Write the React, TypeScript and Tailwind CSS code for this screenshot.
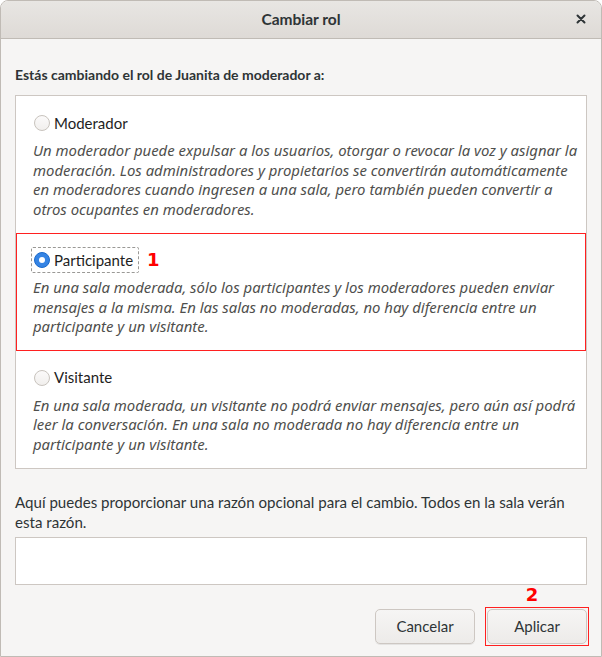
import React from "react";

const REG = { fontFamily: "Lato, 'Noto Sans', sans-serif" };
const ITAL = { fontFamily: "'Noto Sans', 'Open Sans', sans-serif" };

function Radio({ checked }: { checked?: boolean }) {
  if (checked) {
    return (
      <span className="w-[16px] h-[16px] rounded-full bg-[#3584e4] border border-[#1b6acb] flex items-center justify-center shrink-0">
        <span className="w-[6px] h-[6px] rounded-full bg-white" />
      </span>
    );
  }
  return (
    <span className="w-[16px] h-[16px] rounded-full bg-gradient-to-b from-[#fbfafa] to-[#f1efed] border border-[#c8c3bd] shrink-0" />
  );
}

function Row({
  label,
  lines,
  checked,
  annotate,
}: {
  label: string;
  lines: string[];
  checked?: boolean;
  annotate?: boolean;
}) {
  return (
    <div className="relative px-[15px] pt-[15px] pb-[14px]">
      {annotate && (
        <div className="absolute inset-0 border border-[#ff2020] pointer-events-none" />
      )}
      <div className="flex items-center h-[24px]">
        <div
          className={
            "flex items-center gap-[4px] h-[26px] pl-[2px] pr-[5px] rounded-[2px] border " +
            (checked ? "border-dashed border-[#9a9996]" : "border-transparent")
          }
        >
          <Radio checked={checked} />
          <span className="text-[15px] text-[#1e1e1e]" style={REG}>
            {label}
          </span>
        </div>
        {annotate && (
          <span
            className="ml-[8px] text-[#ff0000] font-bold text-[18px] leading-none"
            style={{ fontFamily: "'DejaVu Sans', sans-serif" }}
          >
            1
          </span>
        )}
      </div>
      <div className="mt-[6px] pl-[2px] text-[14.9px] italic leading-[19.5px] text-[#4f4f4d]" style={ITAL}>
        {lines.map((l, i) => (
          <div key={i} className="whitespace-nowrap">
            {l}
          </div>
        ))}
      </div>
    </div>
  );
}

export default function App() {
  return (
    <div className="w-[602px] h-[657px] bg-[#f6f5f4] flex flex-col border border-[#c0bbb5] rounded-t-[8px] overflow-hidden text-[#2e3436]" style={REG}>
      <div className="h-[38px] shrink-0 relative flex items-center justify-center bg-gradient-to-b from-[#e8e6e3] to-[#dedad6] border-b border-[#c0bbb5]">
        <span className="text-[15.5px] font-bold text-[#2e3436]">Cambiar rol</span>
        <span className="absolute right-[12px] top-[9px] w-[16px] h-[18px] flex items-center justify-center">
          <svg width="10" height="10" viewBox="0 0 10 10">
            <path d="M1.5 1.5 L8.5 8.5 M8.5 1.5 L1.5 8.5" stroke="#2e3436" strokeWidth="2" strokeLinecap="round" />
          </svg>
        </span>
      </div>
      <div className="flex-1 flex flex-col px-[14px]">
        <div className="mt-[25px] h-[20px] flex items-center text-[14px] font-bold text-[#2e3436]">
          Estás cambiando el rol de Juanita de moderador a:
        </div>
        <div className="mt-[11px] bg-white border border-[#cdc7c2] flex flex-col">
          <Row
            label="Moderador"
            lines={[
              "Un moderador puede expulsar a los usuarios, otorgar o revocar la voz y asignar la",
              "moderación. Los administradores y propietarios se convertirán automáticamente",
              "en moderadores cuando ingresen a una sala, pero también pueden convertir a",
              "otros ocupantes en moderadores.",
            ]}
          />
          <Row
            label="Participante"
            checked
            annotate
            lines={[
              "En una sala moderada, sólo los participantes y los moderadores pueden enviar",
              "mensajes a la misma. En las salas no moderadas, no hay diferencia entre un",
              "participante y un visitante.",
            ]}
          />
          <Row
            label="Visitante"
            lines={[
              "En una sala moderada, un visitante no podrá enviar mensajes, pero aún así podrá",
              "leer la conversación. En una sala no moderada no hay diferencia entre un",
              "participante y un visitante.",
            ]}
          />
        </div>
        <div className="mt-[23px] text-[15.1px] leading-[20px] text-[#2e3436]">
          <div className="whitespace-nowrap">
            Aquí puedes proporcionar una razón opcional para el cambio. Todos en la sala verán
          </div>
          <div>esta razón.</div>
        </div>
        <div className="mt-[5px] h-[48px] bg-white border border-[#cdc7c2]" />
        <div className="mt-[24px] flex justify-end gap-[12px]">
          <button className="w-[100px] h-[35px] rounded-[5px] border border-[#cdc7c2] bg-gradient-to-b from-[#f6f5f4] to-[#edebe9] text-[15px] text-[#2e3436] shadow-[0_1px_0_rgba(0,0,0,0.07)]">
            Cancelar
          </button>
          <div className="relative">
            <span
              className="absolute left-1/2 -translate-x-1/2 ml-[-5px] -top-[23px] text-[#ff0000] font-bold text-[18px] leading-none"
              style={{ fontFamily: "'DejaVu Sans', sans-serif" }}
            >
              2
            </span>
            <div className="absolute -inset-[2px] border border-[#ff2020] pointer-events-none" />
            <button className="w-[100px] h-[35px] rounded-[5px] border border-[#cdc7c2] bg-gradient-to-b from-[#f6f5f4] to-[#edebe9] text-[15px] text-[#2e3436]">
              Aplicar
            </button>
          </div>
        </div>
      </div>
    </div>
  );
}
